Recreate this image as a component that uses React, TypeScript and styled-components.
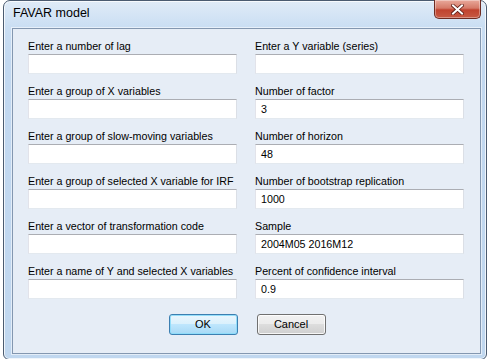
import styled, { createGlobalStyle } from 'styled-components';

const GlobalStyle = createGlobalStyle`
  html, body {
    margin: 0;
    padding: 0;
    background: #ffffff;
    overflow: hidden;
  }
  * {
    box-sizing: border-box;
  }
`;

const Window = styled.div`
  position: relative;
  margin-left: 3px;
  width: 484px;
  height: 360px;
  border: 1px solid #4b5b70;
  border-radius: 7px 7px 6px 6px;
  background: linear-gradient(#e0ebf7, #cadef3 26px, #c2d8f0 60px, #c0d7ef);
  box-shadow: inset 0 0 0 1px rgba(255, 255, 255, 0.75);
  padding: 0 5px 5px 8px;
  display: flex;
  flex-direction: column;
  font-family: 'Liberation Sans', Arial, sans-serif;
`;

const TitleBar = styled.div`
  height: 27px;
  display: flex;
  align-items: flex-start;
  padding: 5px 0 0 1px;
  font-size: 12.5px;
  color: #000000;
`;

const CloseButton = styled.div`
  position: absolute;
  top: -1px;
  right: 5px;
  width: 47px;
  height: 19px;
  border: 1px solid #6e2b22;
  border-top: none;
  border-radius: 0 0 5px 5px;
  background: linear-gradient(#e9a99b, #d57a68 45%, #c0432f 55%, #c75a44);
  box-shadow: inset 0 0 0 1px rgba(255, 255, 255, 0.35);
  display: flex;
  align-items: center;
  justify-content: center;
`;

const Client = styled.div`
  flex: 1;
  border: 1px solid #8397b0;
  background: #e6edf6;
  box-shadow: 0 0 0 1px rgba(255, 255, 255, 0.55);
  padding: 10px 15px 0 15px;
  display: flex;
  flex-direction: column;
`;

const Fields = styled.div`
  display: grid;
  grid-template-columns: 209px 209px;
  column-gap: 18px;
  row-gap: 10px;
`;

const Field = styled.div`
  display: flex;
  flex-direction: column;
  gap: 1px;
`;

const Label = styled.div`
  height: 14px;
  line-height: 14px;
  font-size: 10.7px;
  color: #000000;
  white-space: nowrap;
`;

const Input = styled.div`
  height: 20px;
  background: #ffffff;
  border: 1px solid;
  border-color: #abadb3 #dbdfe6 #e3e9ef #e2e3ea;
  padding: 0 5px;
  font-size: 10.7px;
  line-height: 18px;
  color: #000000;
  white-space: nowrap;
`;

const Buttons = styled.div`
  display: flex;
  justify-content: center;
  gap: 19px;
  margin-top: 15px;
  padding-left: 1px;
`;

const Button = styled.div<{ $default?: boolean }>`
  width: 69px;
  height: 21px;
  border-radius: 3px;
  border: 1px solid ${(p) => (p.$default ? '#3c7fb1' : '#707070')};
  background: ${(p) =>
    p.$default
      ? 'linear-gradient(#eaf6fd, #d9f0fc 50%, #bee6fd 50%, #a7d9f5)'
      : 'linear-gradient(#f2f2f2, #ebebeb 50%, #dddddd 50%, #cfcfcf)'};
  box-shadow: inset 0 0 0 1px
    ${(p) => (p.$default ? 'rgba(140, 220, 250, 0.9)' : 'rgba(255, 255, 255, 0.8)')};
  font-size: 11px;
  line-height: 19px;
  text-align: center;
  color: #000000;
`;

const leftFields = [
  { label: 'Enter a number of lag', value: '' },
  { label: 'Enter a group of X variables', value: '' },
  { label: 'Enter a group of slow-moving variables', value: '' },
  { label: 'Enter a group of selected X variable for IRF', value: '' },
  { label: 'Enter a vector of transformation code', value: '' },
  { label: 'Enter a name of Y and selected X variables', value: '' },
];

const rightFields = [
  { label: 'Enter a Y variable (series)', value: '' },
  { label: 'Number of factor', value: '3' },
  { label: 'Number of horizon', value: '48' },
  { label: 'Number of bootstrap replication', value: '1000' },
  { label: 'Sample', value: '2004M05 2016M12' },
  { label: 'Percent of confidence interval', value: '0.9' },
];

export default function App() {
  const rows = leftFields.flatMap((field, index) => [field, rightFields[index]]);

  return (
    <>
      <GlobalStyle />
      <Window>
        <TitleBar>FAVAR model</TitleBar>
        <CloseButton>
          <svg width="13" height="11" viewBox="0 0 13 11">
            <path d="M2 1.5 L11 9.5 M11 1.5 L2 9.5" stroke="#5a1a12" strokeWidth="3.6" strokeLinecap="square" />
            <path d="M2 1.5 L11 9.5 M11 1.5 L2 9.5" stroke="#ffffff" strokeWidth="2" strokeLinecap="square" />
          </svg>
        </CloseButton>
        <Client>
          <Fields>
            {rows.map((field, index) => (
              <Field key={index}>
                <Label>{field.label}</Label>
                <Input>{field.value}</Input>
              </Field>
            ))}
          </Fields>
          <Buttons>
            <Button $default>OK</Button>
            <Button>Cancel</Button>
          </Buttons>
        </Client>
      </Window>
    </>
  );
}
